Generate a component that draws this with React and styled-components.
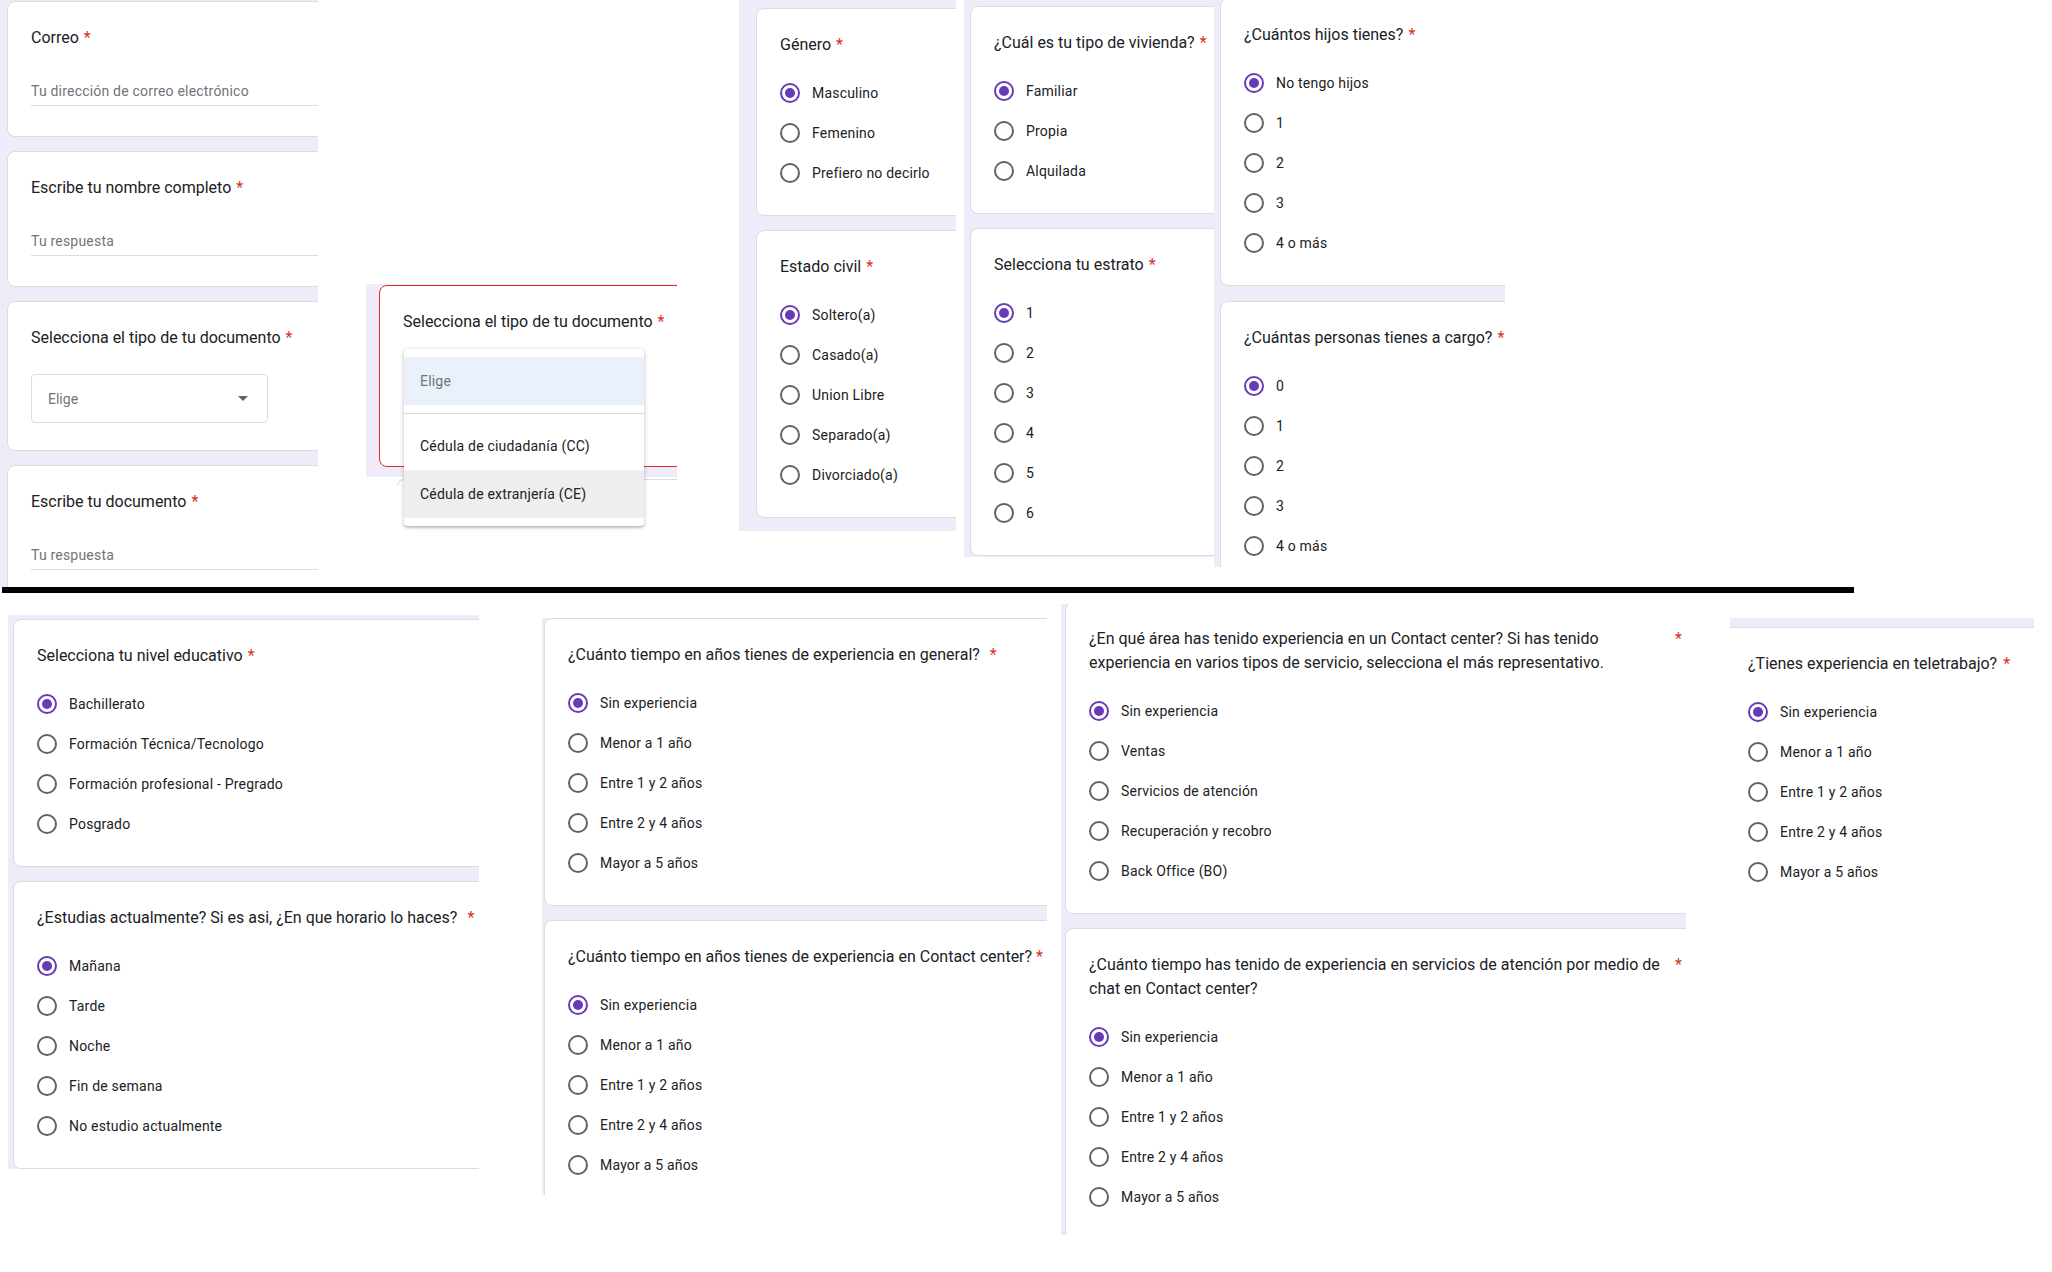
import React from "react";
import styled, { createGlobalStyle } from "styled-components";

const GlobalStyle = createGlobalStyle`
  body {
    margin: 0;
    background: #fff;
    font-family: Roboto, "Liberation Sans", Arial, sans-serif;
    color: #202124;
  }
`;

const LAV = "#f0ebf8";

const Page = styled.div`
  width: 2052px;
  height: 1272px;
  overflow: hidden;
`;

const Row = styled.div`
  display: flex;
  align-items: flex-start;
  height: ${(p) => (p.$h ? `${p.$h}px` : "auto")};
`;

const Strip = styled.div`
  flex: none;
  box-sizing: border-box;
  width: ${(p) => p.$w}px;
  height: ${(p) => (p.$h ? `${p.$h}px` : "auto")};
  margin-left: ${(p) => p.$ml || 0}px;
  margin-top: ${(p) => p.$mt || 0}px;
  padding: ${(p) => p.$pt || 0}px 0 ${(p) => p.$pb || 0}px ${(p) => p.$pl || 0}px;
  background: ${LAV};
  overflow: hidden;
  display: flex;
  flex-direction: column;
  gap: ${(p) => p.$gap ?? 14}px;
`;

const Card = styled.div`
  flex: none;
  box-sizing: border-box;
  width: calc(100% + ${(p) => p.$bleed ?? 40}px);
  height: ${(p) => (p.$h ? `${p.$h}px` : "auto")};
  margin-left: ${(p) => p.$ml || 0}px;
  margin-top: ${(p) => (p.$cutTop ? -2 : 0)}px;
  background: #fff;
  border: 1px solid ${(p) => (p.$error ? "#d93025" : "#dadce0")};
  border-radius: 8px;
  padding: 24px 23px ${(p) => p.$pb ?? 22}px;
`;

const Title = styled.div`
  display: flex;
  align-items: flex-start;
  white-space: nowrap;
  font-size: 16px;
  line-height: 24px;
  color: #202124;
`;

const Star = styled.span`
  color: #d93025;
  margin-left: ${(p) => (p.$push ? "auto" : `${p.$gap ?? 5}px`)};
`;

const Options = styled.div`
  margin-top: 16px;
  display: flex;
  flex-direction: column;
`;

const Option = styled.div`
  height: 40px;
  display: flex;
  align-items: center;
  gap: 12px;
  font-size: 14px;
  letter-spacing: 0.2px;
  color: #202124;
  white-space: nowrap;
`;

const Radio = styled.span`
  flex: none;
  box-sizing: border-box;
  width: 20px;
  height: 20px;
  border-radius: 50%;
  border: 2px solid ${(p) => (p.$on ? "#673ab7" : "#5f6368")};
  display: flex;
  align-items: center;
  justify-content: center;

  &::after {
    content: "";
    display: ${(p) => (p.$on ? "block" : "none")};
    width: 10px;
    height: 10px;
    border-radius: 50%;
    background: #673ab7;
  }
`;

const TextAnswer = styled.div`
  margin-top: 31px;
  padding-bottom: 4px;
  border-bottom: 1px solid #dadce0;
  font-size: 14px;
  line-height: 20px;
  letter-spacing: 0.2px;
  color: #70757a;
  white-space: nowrap;
`;

const SelectBox = styled.div`
  box-sizing: border-box;
  margin-top: 24px;
  width: 237px;
  height: 49px;
  padding: 0 19px 0 16px;
  border: 1px solid #dadce0;
  border-radius: 4px;
  display: flex;
  align-items: center;
  justify-content: space-between;
  font-size: 14px;
  color: #70757a;
`;

const Caret = styled.span`
  width: 0;
  height: 0;
  border-left: 5px solid transparent;
  border-right: 5px solid transparent;
  border-top: 5px solid #5f6368;
`;

const Divider = styled.div`
  width: 1852px;
  height: 6px;
  margin-left: 2px;
  background: #000;
`;

const MenuAnchor = styled.div`
  position: relative;
  flex: none;
  width: ${(p) => p.$w}px;
  margin-left: ${(p) => p.$ml}px;
  margin-top: ${(p) => p.$mt}px;
`;

const CardPeek = styled.div`
  margin: 2px 0 0 31px;
  height: 6px;
  border-top: 1px solid #dadce0;
  border-left: 1px solid #dadce0;
  border-top-left-radius: 8px;
`;

const Menu = styled.div`
  position: absolute;
  left: 38px;
  top: 65px;
  width: 240px;
  padding: 8px 0;
  background: #fff;
  border-radius: 4px;
  box-shadow: 0 2px 2px rgba(0, 0, 0, 0.14), 0 1px 5px rgba(0, 0, 0, 0.2);
  z-index: 2;
`;

const MenuItem = styled.div`
  height: 48px;
  padding-left: 16px;
  display: flex;
  align-items: center;
  font-size: 14px;
  letter-spacing: 0.2px;
  color: ${(p) => (p.$muted ? "#70757a" : "#202124")};
  background: ${(p) => p.$bg || "transparent"};
`;

const MenuRule = styled.div`
  height: 1px;
  margin: 8px 0;
  background: #dadce0;
`;

const RadioCard = ({ title, options, starGap, push, cutTop, bleed, ml }) => (
  <Card $cutTop={cutTop} $bleed={bleed} $ml={ml}>
    <Title>
      <span>{title}</span>
      <Star $gap={starGap} $push={push}>*</Star>
    </Title>
    <Options>
      {options.map((o, i) => (
        <Option key={o}>
          <Radio $on={i === 0} />
          {o}
        </Option>
      ))}
    </Options>
  </Card>
);

const TextCard = ({ title, placeholder }) => (
  <Card $pb={30}>
    <Title>
      <span>{title}</span>
      <Star>*</Star>
    </Title>
    <TextAnswer>{placeholder}</TextAnswer>
  </Card>
);

const years = [
  "Sin experiencia",
  "Menor a 1 año",
  "Entre 1 y 2 años",
  "Entre 2 y 4 años",
  "Mayor a 5 años",
];

export default function App() {
  return (
    <Page>
      <GlobalStyle />
      <Row $h={587}>
        <Strip $w={318} $pl={7} $pt={1} $h={587} $gap={14}>
          <TextCard title="Correo" placeholder="Tu dirección de correo electrónico" />
          <TextCard title="Escribe tu nombre completo" placeholder="Tu respuesta" />
          <Card $pb={27}>
            <Title>
              <span>Selecciona el tipo de tu documento</span>
              <Star>*</Star>
            </Title>
            <SelectBox>
              Elige
              <Caret />
            </SelectBox>
          </Card>
          <TextCard title="Escribe tu documento" placeholder="Tu respuesta" />
        </Strip>

        <MenuAnchor $w={311} $ml={48} $mt={284}>
          <Strip $w={311} $pt={1} $pl={13} $pb={10}>
            <Card $error $h={182}>
              <Title>
                <span>Selecciona el tipo de tu documento</span>
                <Star>*</Star>
              </Title>
            </Card>
          </Strip>
          <CardPeek />
          <Menu>
            <MenuItem $muted $bg="#eaf1fb">Elige</MenuItem>
            <MenuRule />
            <MenuItem>Cédula de ciudadanía (CC)</MenuItem>
            <MenuItem $bg="#eeeeee">Cédula de extranjería (CE)</MenuItem>
          </Menu>
        </MenuAnchor>

        <Strip $w={217} $ml={62} $pt={8} $pl={17} $pb={13}>
          <RadioCard title="Género" options={["Masculino", "Femenino", "Prefiero no decirlo"]} />
          <RadioCard
            title="Estado civil"
            options={["Soltero(a)", "Casado(a)", "Union Libre", "Separado(a)", "Divorciado(a)"]}
          />
        </Strip>

        <Strip $w={250} $ml={8} $pt={6} $pl={6} $pb={1}>
          <RadioCard title="¿Cuál es tu tipo de vivienda?" options={["Familiar", "Propia", "Alquilada"]} />
          <RadioCard title="Selecciona tu estrato" options={["1", "2", "3", "4", "5", "6"]} />
        </Strip>

        <Strip $w={291} $pl={6} $h={567} $gap={15}>
          <RadioCard cutTop title="¿Cuántos hijos tienes?" options={["No tengo hijos", "1", "2", "3", "4 o más"]} />
          <RadioCard title="¿Cuántas personas tienes a cargo?" options={["0", "1", "2", "3", "4 o más"]} />
        </Strip>
      </Row>

      <Divider />

      <Row>
        <Strip $w={471} $ml={8} $mt={22} $pt={4} $pl={5}>
          <RadioCard
            title="Selecciona tu nivel educativo"
            options={[
              "Bachillerato",
              "Formación Técnica/Tecnologo",
              "Formación profesional - Pregrado",
              "Posgrado",
            ]}
          />
          <RadioCard
            title="¿Estudias actualmente? Si es asi, ¿En que horario lo haces?"
            starGap={10}
            options={["Mañana", "Tarde", "Noche", "Fin de semana", "No estudio actualmente"]}
          />
        </Strip>

        <Strip $w={505} $ml={63} $mt={25} $pl={2} $h={577}>
          <RadioCard
            title="¿Cuánto tiempo en años tienes de experiencia en general?"
            starGap={10}
            options={years}
          />
          <RadioCard
            title="¿Cuánto tiempo en años tienes de experiencia en Contact center?"
            starGap={4}
            options={years}
          />
        </Strip>

        <Strip $w={625} $ml={14} $mt={11} $pl={4} $h={631}>
          <RadioCard
            cutTop
            push
            bleed={20}
            title={
              <>
                ¿En qué área has tenido experiencia en un Contact center? Si has tenido
                <br />
                experiencia en varios tipos de servicio, selecciona el más representativo.
              </>
            }
            options={[
              "Sin experiencia",
              "Ventas",
              "Servicios de atención",
              "Recuperación y recobro",
              "Back Office (BO)",
            ]}
          />
          <RadioCard
            push
            bleed={20}
            title={
              <>
                ¿Cuánto tiempo has tenido de experiencia en servicios de atención por medio de
                <br />
                chat en Contact center?
              </>
            }
            options={years}
          />
        </Strip>

        <Strip $w={304} $ml={44} $mt={25} $pt={9} $h={290}>
          <RadioCard
            ml={-6}
            bleed={60}
            starGap={6}
            title="¿Tienes experiencia en teletrabajo?"
            options={years}
          />
        </Strip>
      </Row>
    </Page>
  );
}
